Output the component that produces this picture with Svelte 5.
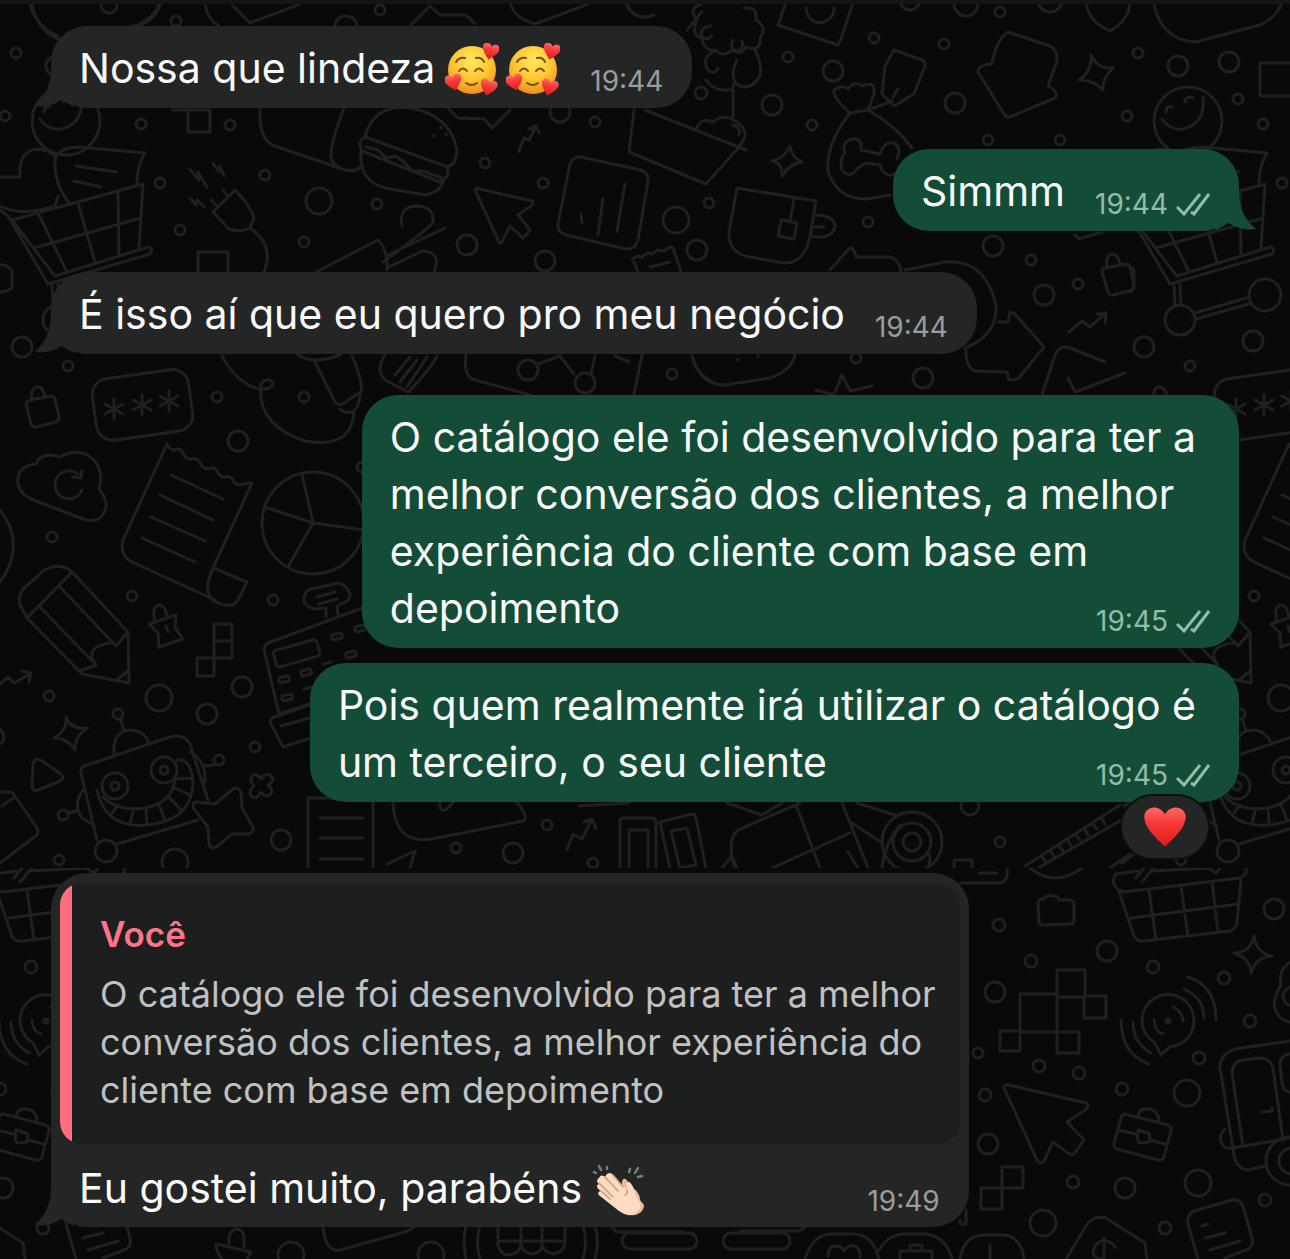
<script>
	const messages = [
		{ from: 'them', text: 'Nossa que lindeza', emoji: ['love', 'love'], time: '19:44', tail: true },
		{ from: 'me', text: 'Simmm', time: '19:44', tail: true },
		{ from: 'them', text: 'É isso aí que eu quero pro meu negócio', time: '19:44', tail: true },
		{
			from: 'me',
			text: 'O catálogo ele foi desenvolvido para ter a\nmelhor conversão dos clientes, a melhor\nexperiência do cliente com base em\ndepoimento',
			time: '19:45'
		},
		{
			from: 'me',
			text: 'Pois quem realmente irá utilizar o catálogo é\num terceiro, o seu cliente',
			time: '19:45',
			grouped: true,
			reaction: true
		},
		{
			from: 'them',
			quote: {
				author: 'Você',
				text: 'O catálogo ele foi desenvolvido para ter a melhor\nconversão dos clientes, a melhor experiência do\ncliente com base em depoimento'
			},
			text: 'Eu gostei muito, parabéns',
			emoji: ['clap'],
			time: '19:49',
			tail: true
		}
	];

	// wallpaper dots: x, y, radius
	const topDots = [
		[141, 124, 5], [230, 125, 5], [265, 175, 5], [180, 230, 5], [319, 201, 13], [377, 204, 5],
		[304, 242, 5], [485, 163, 5], [543, 183, 5], [467, 245, 10], [545, 261, 10], [595, 122, 5],
		[676, 220, 13], [697, 250, 10], [380, 10, 5], [176, 21, 5], [709, 203, 5], [701, 93, 6],
		[217, 397, 5], [304, 397, 5], [528, 370, 10], [585, 383, 10], [672, 374, 5], [109, 5, 8],
		[788, 57, 5], [874, 38, 5], [833, 71, 10], [772, 105, 10], [812, 125, 5], [955, 103, 10],
		[944, 44, 5], [1000, 12, 5], [1060, 140, 5], [988, 140, 5], [868, 222, 5], [993, 246, 10],
		[1031, 260, 5], [1044, 295, 10], [1078, 284, 5], [923, 378, 10], [856, 358, 5], [910, 0, 10],
		[966, 4, 12], [1050, 0, 12], [560, 112, 10], [238, 441, 10], [362, 467, 5], [273, 600, 5],
		[242, 687, 10], [207, 714, 10], [255, 747, 5], [281, 840, 10], [175, 862, 13], [456, 848, 5],
		[513, 853, 10], [547, 825, 5], [593, 863, 5], [970, 806, 9], [1000, 842, 5]
	];
	const topTileDots = [
		[16, 53, 5], [56, 66, 10], [107, 62, 10], [5, 116, 5], [116, 99, 5], [141, 124, 5],
		[160, 183, 5], [22, 347, 10], [68, 366, 5], [131, 341, 10], [52, 537, 5], [132, 596, 5],
		[159, 698, 13], [49, 696, 5], [-4, 737, 8], [59, 860, 5]
	];
	const bottomDots = [
		[999, 925, 6], [1031, 961, 6], [995, 992, 10], [978, 1053, 5], [1039, 1066, 6], [1079, 1073, 6],
		[985, 1095, 6], [988, 1144, 10], [1073, 1182, 6], [1043, 1223, 13], [291, 1255, 13], [431, 1255, 13]
	];
	const bottomTileDots = [
		[1107, 951, 10], [1153, 967, 6], [1224, 978, 6], [1274, 909, 10], [1250, 1021, 6], [1199, 1058, 6],
		[1122, 1089, 6], [1187, 1093, 13], [1125, 1188, 10], [1198, 1183, 13], [1265, 1200, 6], [1165, 1228, 6]
	];
</script>

{#snippet dots(list)}
	{#each list as [x, y, r]}
		<circle cx={x} cy={y} {r} />
	{/each}
{/snippet}

{#snippet lines(text)}
	{#each text.split('\n') as line, i}{#if i > 0}<br />{/if}<span>{line}</span>{/each}
{/snippet}

{#snippet heartShape()}
	<path d="M0 7C-3 4-9-1-9-6C-9-10-3-12 0-7C3-12 9-10 9-6C9-1 3 4 0 7Z" />
{/snippet}

{#snippet emojiIcon(name)}
	{#if name === 'love'}
		<svg class="emoji" viewBox="0 0 54 54" role="img" aria-label="rosto sorrindo com corações">
			<circle cx="27" cy="27" r="24" fill="url(#face)" />
			<g fill="none" stroke="#7a4a10" stroke-width="2" stroke-linecap="round">
				<path d="M11 19q3-5 9-4M31 15q6-1 8 4" />
				<path d="M14 28q4-5 8 0M30 28q4-5 8 0" />
				<path d="M21 40q6 4 11 0" />
			</g>
			<g fill="url(#heart)">
				<g transform="translate(45 10) rotate(14) scale(.95)">{@render heartShape()}</g>
				<g transform="translate(9 41) rotate(-14) scale(.95)">{@render heartShape()}</g>
				<g transform="translate(43 46) rotate(14) scale(.95)">{@render heartShape()}</g>
			</g>
		</svg>
	{:else}
		<svg class="emoji" viewBox="0 0 54 54" role="img" aria-label="palmas">
			<g stroke="#75837f" stroke-width="2.4" stroke-linecap="round">
				<path d="M2 9l2 1M7 3l2 4M15 4v2M38 6l-1 3M46 5l-3 5M50 13l-4 1" />
			</g>
			<path fill="#e9b995" d="M30 20C30 14 35 15 36 20L39 24C45 27 48 32 48 37L52 42C52 49 45 53 39 52L30 48Z" />
			<path fill="#fbdcc2" d="M7 15C9 11 12 13 13 14C15 9 19 9 21 12L35 27C35 23 33 18 37 19C42 22 42 29 45 34C48 40 51 43 46 48C40 55 33 52 27 48L8 33C5 31 6 28 9 28C4 25 4 22 7 21C4 19 5 16 7 15Z" />
			<path fill="none" stroke="#cf9a78" stroke-width="1.5" stroke-linecap="round" d="M13 14l13 14M7 20l14 14M9 28l9 8M21 12l10 12M35 27q1 4-2 5" />
		</svg>
	{/if}
{/snippet}

<main class="chat">
	<svg class="wallpaper" aria-hidden="true">
		<defs>
			<clipPath id="top-half"><rect width="3000" height="868" /></clipPath>
			<clipPath id="bottom-half"><rect y="868" width="3000" height="3000" /></clipPath>
			<radialGradient id="face" cx=".5" cy=".3" r=".72">
				<stop offset="0" stop-color="#ffe95c" />
				<stop offset=".55" stop-color="#fdc632" />
				<stop offset="1" stop-color="#ee8a1c" />
			</radialGradient>
			<linearGradient id="heart" x2="0" y2="1">
				<stop offset="0" stop-color="#ff6a63" />
				<stop offset=".4" stop-color="#f7393a" />
				<stop offset="1" stop-color="#e01a14" />
			</linearGradient>

			<g id="top-tile">
				{@render dots(topTileDots)}
				<!-- bowl, shield, frame -->
				<path d="M31 0Q38 40 73 42L138 25Q158 15 160 0M138 63h34v33h-34z" />
				<!-- person with book -->
				<circle cx="66" cy="121" r="34" />
				<path d="M40 119Q48 131 62 129Q84 123 81 97M44 112q0-7 6-5M63 102q1-7 8-4" />
				<path d="M0 177H20Q18 150 38 149Q50 150 56 158M0 206Q22 217 55 206L58 196" />
				<path d="M70 204Q54 185 55 160Q58 147 80 147L145 153Q137 165 137 184M76 166l41 6M74 181l27 6" />
				<!-- cart -->
				<path d="M12 220L143 184L139 248M12 220L54 275M0 210L8 216L48 284L150 254Q154 248 148 247L55 276M38 213L66 270M78 203L95 262M118 192L119 254M34 248L141 218" />
				<path d="M52 284l1 22M58 284l1 21M73 313l55-16M74 319l56-16" />
				<circle cx="58" cy="320" r="15" />
				<circle cx="143" cy="295" r="16" />
				<path d="M0 265h5l7 5v16q0 5-12 6" />
				<!-- padlock -->
				<path d="M26 404q1-3 4-4l20-4q4 0 5 3l4 18q0 4-3 5l-20 5q-4 0-5-3zM32 400q-2-12 5-13q7 0 8 11" />
				<!-- password field -->
				<rect x="94" y="374" width="97" height="62" rx="16" transform="rotate(-8 142 405)" />
				<path d="M114 399v20M105 404l18 10M105 414l18-10M142 395v20M133 400l18 10M133 410l18-10M169 391v20M160 396l18 10M160 406l18-10" />
				<!-- cloud backup -->
				<path d="M18 484Q16 466 36 464Q41 451 60 457Q80 446 94 460Q104 472 99 489Q112 505 101 517Q94 523 83 519L36 501Q20 495 18 484Z" />
				<path d="M82 490a14 14 0 1 1-4-16M73 477l8 1l1-7" />
				<!-- receipt -->
				<path d="M167 444L123 540Q119 555 132 562L215 600M167 444q4 7 8 6q5-3 8 3q2 6 8 6q6-2 9 4q3 6 9 6q6-3 9 3q2 6 8 5q6-1 8 5q3 4 10 2q6-2 8-1L213 568Q203 590 212 600Q232 611 238 600L247 582L213 568M171 475l52 24M160 495l53 25M151 517l54 24M142 538l53 24" />
				<path d="M0 510Q27 545 0 582" />
				<!-- pencil -->
				<path d="M27 618L20 605Q17 592 30 583L43 571Q60 561 72 572L128 632L129 683L82 674ZM27 618L72 572M40 607L96 665L80 671M60 587L116 646L128 632M96 665Q86 652 99 646Q114 640 116 646M117 680L129 670" />
				<!-- pushpin -->
				<path d="M149 624l27-9l-1 13l8 11l-24 8l-1-14zM155 621q-4-14 4-16q7 1 8 13M166 626l2 6" />
				<path d="M0 684l8-7l6 6l16-9M22 671l9 2l-2 9" />
				<!-- sparkle and play -->
				<path d="M66 717Q70 730 88 728Q75 735 75 750Q67 738 54 738Q68 730 66 717ZM33 764q2-7 9-3l19 13q4 4-1 7l-22 9q-6 2-6-5z" />
				<!-- robot -->
				<path d="M84 766L170 737Q184 733 190 744L208 800M198 820L117 844M97 840L82 777Q79 769 84 766M114 754Q112 730 132 730Q144 731 149 743M124 730l-4-11M190 752Q206 760 205 782M205 766l9-1M84 789Q72 804 82 818L95 826M76 811l-7 2" />
				<circle cx="118" cy="714" r="5" /><circle cx="219" cy="760" r="5" />
				<circle cx="63" cy="815" r="5" /><circle cx="106" cy="851" r="11" />
				<circle cx="115" cy="786" r="13" /><circle cx="164" cy="770" r="13" />
				<circle cx="115" cy="786" r="4" /><circle cx="164" cy="770" r="4" />
				<path d="M97 790Q105 828 145 825Q190 822 193 785Q192 758 177 760M103 797Q118 812 145 808Q175 802 175 776M112 813l6-8M130 823l4-15M147 825l-1-17M165 820l-6-15M180 809l-10-11M190 795l-15-7M192 778l-17 1" />
				<!-- wallet corner -->
				<path d="M0 792L12 792L37 828Q40 834 33 838L0 863M2 806L15 797" />
			</g>

			<g id="bottom-tile">
				{@render dots(bottomTileDots)}
				<!-- basket -->
				<path d="M1124 892Q1108 886 1116 874L1138 871M1150 871L1210 868M1124 892L1240 878Q1248 874 1246 868M1119 892L1134 936Q1137 942 1144 941L1230 931Q1236 929 1237 922L1241 880M1131 918L1238 904M1149 890L1156 940M1181 886L1188 936M1212 882L1218 932M1136 878l8-10M1142 882l12-14M1208 868l8 5l4-5" />
				<path d="M1254 936Q1256 953 1272 956Q1256 957 1251 973Q1250 958 1234 953Q1250 953 1254 936Z" />
				<!-- broadcast -->
				<path d="M1155 1043L1161 1055L1170 1047Q1194 1042 1194 1020A26 26 0 1 0 1155 1043ZM1154 1020q1 12 9 14M1173 1007q9 4 10 14M1184 989Q1204 998 1204 1018M1188 977Q1216 986 1216 1020M1133 1022Q1133 1043 1151 1053M1121 1020Q1121 1054 1149 1064" />
				<circle cx="1168" cy="1021" r="2" />
				<!-- briefcase -->
				<path d="M1125 1114l43 11q4 2 3 6l-7 26q-2 4-6 3l-41-11q-4-2-3-6l7-25q1-4 4-4M1138 1116q1-8 11-7q10 2 10 12M1119 1130l16 4M1150 1140l15 4M1138 1130l10 3q3 1 1 9l-9 1q-4-1-2-13" />
				<!-- bus -->
				<path d="M1290 1041L1235 1049Q1219 1055 1220 1068L1234 1155Q1236 1168 1247 1170L1266 1166M1243 1146L1232 1073Q1233 1061 1243 1060L1260 1058Q1270 1058 1273 1068L1283 1140M1232 1148L1290 1138M1262 1112l10-1v-3M1290 1054Q1280 1054 1280 1066L1282 1083Q1284 1092 1290 1092M1225 1129Q1218 1136 1222 1144Q1226 1150 1232 1148" />
				<circle cx="1290" cy="1161" r="24" /><circle cx="1292" cy="1161" r="13" />
				<path d="M1290 962Q1278 970 1281 985Q1272 1000 1275 1008Q1278 1020 1290 1022M1290 987q-7 4-7 10q2 8 7 8" />
				<!-- note -->
				<path d="M1198 1259L1188 1224Q1187 1214 1194 1211L1232 1200Q1240 1199 1243 1206L1252 1238Q1254 1247 1246 1250L1225 1258M1202 1226l6-2M1205 1238l20-5M1210 1250l30-9" />
				<!-- price tag -->
				<path d="M1066 1259L1088 1223Q1096 1215 1106 1218L1145 1243L1147 1259M1115 1247q-6-8-14-6q-8 4-8 12q1 4 8 6M1104 1238v21" />
			</g>
		</defs>

		<g class="doodles" clip-path="url(#top-half)">
			<use href="#top-tile" />
			<use href="#top-tile" x="1122" />
			{@render dots(topDots)}
			<!-- plug -->
			<path d="M213 212L235 190Q250 205 254 218L250 228Q240 233 229 229ZM218 207l-7-7M228 197l-5-7M250 228Q275 245 264 272M190 169l9 11l-1-8l9 15M213 163l6 9l1-6l4 10M190 198l6 7l1-5l7 7" />
			<path d="M172 110h16h22v22h-22v-22M198 272v-20h30v20" />
			<!-- bread and burger -->
			<path d="M260 108Q258 140 275 146L345 170Q356 173 362 165M344 108Q326 155 333 162Q340 172 356 170" />
			<path d="M365 137Q372 108 403 107Q450 112 457 150Q456 168 445 166ZM365 137q-8 4-3 14L440 182q11-5 7-14M361 152Q358 180 385 188L425 195Q440 192 443 182M366 147l12 3l8 8l10-2l9 7l8 8l10 0l22 8" />
			<path d="M434 135v1M441 127v1M446 134v1" />
			<path d="M448 108L458 118L484 119L492 128L510 110M519 151l5-13l5 2l7-14M529 129l7-3l3 7" />
			<path d="M208 0M30 5Q35 25 58 36M160 5Q155 20 140 25M205 4Q208 20 218 25M232 5L250 23L300 4M411 25L430 6L440 15L466 15L475 24M511 5Q515 18 535 24L588 4" />
			<path d="M335 25q2-9 11-9t11 9M627 5q8 17 27 10M687 30Q695 20 702 12" />
			<!-- cursor -->
			<path d="M475 190Q476 187 480 189L532 201Q535 203 531 206L518 215L530 230L523 238L510 226L502 242Q500 245 498 240Z" />
			<!-- chart tile -->
			<path d="M580 157L641 170Q649 173 648 182L638 240Q635 250 626 249L566 235Q557 232 558 224L570 164Q573 156 580 157ZM581 214l1 9M603 199l-5 36M625 184l-8 47" />
			<!-- envelope -->
			<path d="M634 110L629 152L706 184L740 146M645 110L746 150M696 130Q700 117 713 122Q724 112 738 123Q752 134 738 147M733 125q8 2 6 10" />
			<!-- pocket knife -->
			<path d="M316 272L378 240Q388 250 387 270M386 256L445 228M402 226Q398 207 416 206Q434 206 433 222Q430 228 383 262M387 268L422 251Q442 252 434 272M632 259l6-3l4 1l5-4l5 1l6-4l6 1l6-4l3 1l8 24M634 262l4 10M650 267l20-5" />
			<!-- tree -->
			<path d="M697 20Q688 8 700 5M697 20Q690 35 702 38Q704 52 716 50Q722 58 732 50Q742 56 746 47Q762 52 760 38Q768 28 756 20Q758 6 744 8M711 26Q700 27 701 36Q708 42 712 35M733 40q-4 8 3 11q8-1 6-10M716 50Q700 58 708 70Q714 76 718 68M706 80Q715 92 728 90Q734 90 734 84M737 60Q728 80 740 86Q752 90 760 76Q762 62 755 50M733 90V118" />
			<path d="M785 5L778 25L838 45Q840 44 852 5M806 8Q808 22 820 23Q834 20 834 8" />
			<!-- label and money bag -->
			<path d="M894 50L922 60Q926 62 925 66L914 94L894 106L882 94L885 66ZM868 110L892 101M898 89l-5 8" />
			<path d="M850 113Q832 97 834 90Q842 84 848 89Q854 80 862 86Q876 80 874 94L868 110ZM850 113Q825 145 828 172Q838 200 868 199L890 195M868 110Q895 125 912 148" />
			<path d="M861 150Q862 137 852 139Q841 142 845 153Q839 159 842 170Q850 180 858 168L866 163L880 165Q884 178 895 174M861 150L880 154Q885 140 894 143Q902 148 897 158" />
			<path d="M790 146Q792 158 802 162Q790 163 782 176Q783 163 772 161Q785 158 790 146ZM1091 55Q1097 69 1113 68Q1102 78 1103 90Q1094 80 1079 80Q1092 72 1091 55Z" />
			<path d="M1008 32L1050 46Q1060 52 1056 64L1048 86Q1060 92 1055 98L1010 117Q1006 118 1004 114L978 72Q977 65 992 64Q996 40 1008 32Z" />
			<path d="M1086 0Q1086 20 1110 31Q1130 20 1130 0" />
			<!-- mug -->
			<path d="M737 188L816 201L810 237Q804 264 784 263L745 256Q728 250 729 232ZM815 215Q836 216 835 227Q832 240 811 236M815 227h9M794 199l-4 22M781 220l16 3l-3 16l-16-3z" />
			<path d="M830 270L848 250Q853 244 856 257L890 257Q900 260 901 272M905 270L945 262Q985 258 996 305Q998 335 965 348M998 322H1008L1010 312L1015 314L1044 347L1018 379L1009 380L1007 372L975 371Q965 367 966 348" />
			<!-- small padlock and trend -->
			<path d="M1102 272q0-3 3-4l20-4q4 0 5 3l4 19q0 4-3 5l-18 4q-4 1-5-3zM1107 267q-2-12 5-13q7 1 8 11M1069 332l13-11l8 6l16-14M1097 314l9-1l-1 10" />
			<path d="M1042 395L1055 355Q1060 344 1070 348L1105 362M1068 378L1075 392L1125 373M1075 235l4 4l23-7" />
			<path d="M692 356Q700 385 725 385L770 378Q792 370 795 355M816 390l18 5l8-20l8 16l22-5M738 359v1M758 356v1" />
			<!-- microphone cable -->
			<path d="M222 356Q238 385 260 389Q272 390 273 383Q268 376 261 384Q256 425 305 441Q352 449 354 412M315 362L335 402Q340 408 348 400L361 392Q363 380 352 356M340 409q10 8 17-2q3-6 3-14" />
			<path d="M385 355Q375 370 385 380L408 392Q430 370 437 356M395 375l15-18M400 382l17-22M407 387l20-30M298 355q15 10 42 0" />
			<path d="M466 355Q463 377 475 380L530 395M538 364l22-8l14 18M591 374l4-18M615 356l14 6M642 355l-8 40M692 356q4 18 24 28" />
			<!-- pie chart -->
			<circle cx="313" cy="523" r="51" />
			<path d="M313 523L302 474M313 523L265 507M313 523L364 530M313 523L288 567" />
			<path d="M214 624h18v34h-18zM214 641h18M197 658h17v18h-17z" />
			<!-- cash register -->
			<path d="M268 643Q262 647 265 654L279 714L313 703M268 643L362 608L366 609M272 718L270 722L283 747L314 737M272 718L312 704M281 726l28-8M326 617v-9l-12 1Q303 606 304 598Q304 591 312 589L338 583Q346 584 350 594Q350 601 343 603L337 606l1 9M317 597l18-5M319 604l18-5" />
			<rect x="274" y="645" width="45" height="17" rx="3" transform="rotate(-16 296 653)" />
			<path d="M279 678l8-2q3 0 2 5l-8 2q-3-1-2-5M301 671l8-2q3 0 2 5l-8 2q-3-1-2-5M323 664l8-2M346 653l8-2q3 0 2 5l-8 2q-3-1-2-5M282 696l8-2q3 0 2 5l-8 2q-3-1-2-5M304 689l8-2M332 635l8-2q3 0 2 5l-8 2q-3-1-2-5M355 627l8-2q3 0 2 5l-8 2q-3-1-2-5" />
			<!-- star -->
			<path d="M196 802L215 804L233 789Q239 786 241 793L242 808L253 827Q254 834 247 834L232 834L216 847Q210 850 209 843L208 827L194 809Q191 803 196 802ZM252 776q4-4 9 3q6-8 10-3q5 4-3 9q6 5 2 10q-4 3-9-3q-4 8-9 5q-5-5 2-11q-5-5-2-10" />
			<!-- documents under the last green bubble -->
			<path d="M308 868V798H373V868M320 818h43M320 838h43M320 859h43M393 803Q395 845 432 839L523 821Q530 818 515 800M440 803q0 12 8 5l6-7M415 851l-28 13M415 851l-5 17M567 850l6-16l9 5l10-20M584 822l8-3l4 9" />
			<path d="M620 868V822q0-4 4-4h28q4 0 4 4v46M629 868v-38h19v38M660 822l32-8q3 0 4 4l10 50M660 822l10 46M671 831l16-3l9 37l-16 3zM579 806l50-3" />
			<path d="M735 868Q726 840 738 830L800 803M722 868l10-12l5 12M796 805L820 868M772 868L850 833M842 803L868 868M727 803l35 12l20-12M857 803L895 815M852 823l30 20M848 852l10 16" />
			<circle cx="912" cy="842" r="30" /><circle cx="912" cy="842" r="19" /><circle cx="912" cy="842" r="9" />
			<path d="M882 868Q884 845 900 825M928 868Q932 858 928 852M954 868v-8h18v8M1025 866L1120 805M1038 868L1125 818M1046 862l-4-5M1054 857l-4-7M1063 851l-4-5M1071 846l-4-7M1080 840l-4-5M1088 835l-4-7M1097 829l-4-5M1105 824l-4-7M1110 868L1130 854" />
		</g>

		<g class="doodles" clip-path="url(#bottom-half)">
			<use href="#bottom-tile" />
			<use href="#bottom-tile" x="-1122" />
			{@render dots(bottomDots)}
			<path d="M960 883H1000Q1009 881 1007 868M979 873h18M1030 868Q1055 888 1082 868" />
			<path d="M1038 903q0-3 4-4l2 0q3-5 10-3q4 0 5 4l11 0q4 1 4 4v16q0 4-4 4l-27 1q-4 0-4-4zM1020 994h37v38h-37zM1057 970h28v27h-28zM1084 996h22v22h-22zM1000 1031h20v20h-20zM1057 1032h22v21h-22zM1057 997v35M1002 1167h21v21h-21zM981 1188h21v21h-21z" />
			<path d="M1004 1088Q1004 1084 1009 1085L1086 1103Q1090 1107 1085 1110L1067 1122L1084 1140L1074 1154Q1071 1155 1068 1153L1053 1142L1044 1161Q1040 1165 1037 1160Z" />
			<!-- strip under the quoted message -->
			<path d="M229 1245v-8q2-8 8-8q7 1 7 9v9M216 1244l35 8M216 1244q0 8 6 15M251 1252l-4 7M323 1227Q325 1252 340 1250L405 1232Q414 1228 418 1224" />
			<path d="M466 1226q-4 15 0 33M480 1226q-5 15 0 33M583 1226q5 15 0 33M595 1226q5 15 0 33M498 1227v18q2 10 12 10q10-2 11-10v-18M521 1245q2 8 12 9q8-1 9-9v-18M542 1245q2 8 12 9q10-2 11-12v-15M498 1241h67" />
			<rect x="622" y="1233" width="75" height="16" rx="8" /><rect x="723" y="1233" width="67" height="16" rx="8" />
			<path d="M612 1227l4 5h66M740 1231h58q6-2 8-6M805 1259q8-26 28-25h20q20 0 26 25M879 1250q10-17 28-16h18q20 2 27 24M828 1256q0-10 8-10q6 0 8 5q4-6 10-5q7 2 6 11M900 1259v-8h32v8M910 1251v-6h12v6M960 1259q4-24 24-24h22q16 4 18 24M990 1245v14M960 1220v4h6v-14" />
		</g>
	</svg>

	<ul class="messages">
		{#each messages as message}
			<li class="message {message.from}" class:grouped={message.grouped}>
				<div class="bubble">
					{#if message.tail}
						<svg class="tail" viewBox="0 0 40 40" aria-hidden="true">
							<path d="M17 0Q17 25 0 38Q16 40 27 32L40 39V0Z" />
						</svg>
					{/if}
					{#if message.quote}
						<blockquote>
							<cite>{message.quote.author}</cite>
							<p>{@render lines(message.quote.text)}</p>
						</blockquote>
					{/if}
					<p class="text">{@render lines(message.text)}{#each message.emoji ?? [] as name}{@render emojiIcon(name)}{/each}<span class="meta">
							<time>{message.time}</time>
							{#if message.from === 'me'}
								<svg class="checks" viewBox="0 0 34 24" role="img" aria-label="entregue">
									<path d="M1 15l7 7L24 2M15 20l3 2L33 2" />
								</svg>
							{/if}
						</span></p>
					{#if message.reaction}
						<button class="reaction" aria-label="Reação: coração">
							<svg viewBox="-10 -11 20 19" aria-hidden="true">
								<g fill="url(#heart)">{@render heartShape()}</g>
							</svg>
						</button>
					{/if}
				</div>
			</li>
		{/each}
	</ul>
</main>

<style>
	:global(body) {
		background: #090909;
	}

	.chat {
		position: relative;
		box-sizing: border-box;
		min-height: 100vh;
		padding: 22px 51px 32px;
		border-top: 4px solid #121716;
		overflow: hidden;
		color: #fafafa;
		font-family: Inter, "Liberation Sans", sans-serif;
		font-size: 41px;
		line-height: 57px;
	}

	.wallpaper {
		position: absolute;
		inset: -4px 0 0;
		width: 100%;
		height: calc(100% + 4px);
	}

	.doodles {
		fill: none;
		stroke: #1f2020;
		stroke-width: 3;
		stroke-linecap: round;
		stroke-linejoin: round;
	}

	.messages {
		position: relative;
		display: flex;
		flex-direction: column;
		gap: 41px;
		margin: 0;
		padding: 0;
		list-style: none;
	}

	.message {
		display: flex;
	}

	.message.me {
		justify-content: flex-end;
	}

	.message.grouped {
		margin-top: -26px;
		margin-bottom: 30px;
	}

	.bubble {
		position: relative;
		border-radius: 36px;
		background: #242626;
	}

	.me .bubble {
		background: #144d37;
	}

	p {
		margin: 0;
	}

	.text {
		padding: 14px 43px 11px 28px;
	}

	blockquote + .text {
		padding-top: 16px;
		padding-bottom: 10px;
	}

	.meta {
		float: right;
		display: flex;
		align-items: center;
		gap: 8px;
		box-sizing: border-box;
		height: 57px;
		margin: 0 -14px 0 30px;
		padding-top: 25px;
		color: #9b9d9d;
		font-size: 28px;
		line-height: 32px;
	}

	.me .meta {
		color: #92bda9;
	}

	.checks {
		width: 34px;
		height: 24px;
		fill: none;
		stroke: currentColor;
		stroke-width: 3;
	}

	.tail {
		position: absolute;
		left: -17px;
		bottom: 0;
		width: 40px;
		height: 40px;
		fill: #242626;
	}

	.me .tail {
		left: auto;
		right: -17px;
		fill: #144d37;
		transform: scaleX(-1);
	}

	.emoji {
		width: 54px;
		height: 54px;
		margin: -12px 0 -8px 10px;
		vertical-align: middle;
	}

	.emoji + .emoji {
		margin-left: 7px;
	}

	blockquote {
		position: relative;
		top: 10px;
		margin: 0 9px 10px;
		padding: 27px 24px 30px 40px;
		border-radius: 22px;
		overflow: hidden;
		background: #1d1f1f;
		color: #c0c2c2;
		font-size: 36px;
		line-height: 48px;
	}

	blockquote::before {
		content: "";
		position: absolute;
		inset: 0 auto 0 0;
		width: 12px;
		background: #ff6e7f;
	}

	cite {
		display: block;
		margin-bottom: 12px;
		color: #ff7488;
		font-size: 35px;
		font-style: normal;
		font-weight: 600;
	}

	.reaction {
		position: absolute;
		right: 29px;
		bottom: -58px;
		display: flex;
		align-items: center;
		justify-content: center;
		width: 90px;
		height: 66px;
		padding: 0;
		border: 2px solid #0c0f0e;
		border-radius: 33px;
		background: #242626;
	}

	.reaction svg {
		width: 46px;
		height: 44px;
	}
</style>
